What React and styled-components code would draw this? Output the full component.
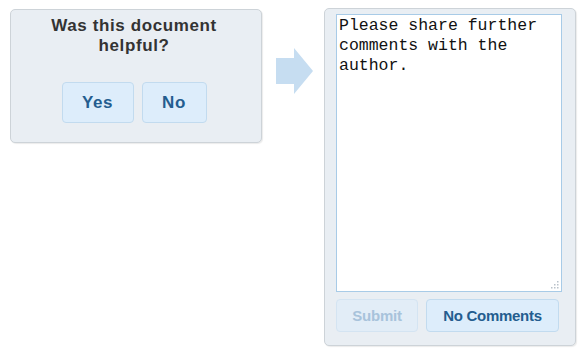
import React from "react";
import styled, { createGlobalStyle } from "styled-components";

const Global = createGlobalStyle`
  html, body { margin: 0; padding: 0; background: #ffffff; }
  body { font-family: "Liberation Sans", Arial, sans-serif; }
`;

const Page = styled.div`
  display: flex;
  align-items: flex-start;
  width: 583px;
  height: 354px;
  padding: 0 0 0 10px;
  box-sizing: border-box;
`;

const Panel = styled.div`
  box-sizing: border-box;
  background: #e9eef3;
  border: 1px solid #cdd3d8;
  border-radius: 5px;
  box-shadow: 1px 1px 1px rgba(0, 0, 0, 0.08);
  display: flex;
  flex-direction: column;
`;

const AskPanel = styled(Panel)`
  margin-top: 9px;
  width: 252px;
  height: 134px;
  align-items: center;
  padding: 6px 4px 0 0;
`;

const Title = styled.div`
  font-family: "Liberation Sans", Arial, sans-serif;
  font-weight: bold;
  font-size: 17px;
  line-height: 20px;
  letter-spacing: 0.6px;
  color: #333333;
  text-align: center;
  width: 200px;
`;

const ButtonRow = styled.div`
  display: flex;
  gap: ${(p) => p.$gap}px;
  margin-top: ${(p) => p.$top}px;
`;

const Btn = styled.button`
  box-sizing: border-box;
  width: ${(p) => p.$w}px;
  height: ${(p) => p.$h}px;
  padding: 0;
  border-radius: 4px;
  border: 1px solid ${(p) => (p.disabled ? "#d4e4f2" : "#c2dbef")};
  background: ${(p) => (p.disabled ? "#e2edf7" : "#ddedfb")};
  color: ${(p) => (p.disabled ? "#a8c3db" : "#245d8f")};
  font-family: "Liberation Sans", Arial, sans-serif;
  font-weight: bold;
  font-size: ${(p) => p.$fs}px;
  letter-spacing: ${(p) => p.$ls || 0}px;
  cursor: ${(p) => (p.disabled ? "default" : "pointer")};
`;

const ArrowBox = styled.div`
  margin: 48px 11px 0 14px;
  width: 37px;
  height: 46px;
  display: flex;
`;

const CommentPanel = styled(Panel)`
  margin-top: 8px;
  width: 252px;
  height: 338px;
  padding: 5px 0 0 11px;
`;

const AreaWrap = styled.div`
  position: relative;
  width: 226px;
  height: 278px;
`;

const Area = styled.textarea`
  box-sizing: border-box;
  width: 100%;
  height: 100%;
  margin: 0;
  resize: none;
  border: 1px solid #a8cbe7;
  background: #ffffff;
  padding: 1px 2px;
  font-family: "Liberation Mono", "Courier New", monospace;
  font-size: 16.5px;
  line-height: 20px;
  color: #111111;
  outline: none;
`;

const Grip = styled.svg`
  position: absolute;
  right: 3px;
  bottom: 3px;
`;

function Arrow() {
  return (
    <svg width="37" height="46" viewBox="0 0 37 46">
      <path d="M0 10 H18 V0 L37 23 L18 46 V36 H0 Z" fill="#c6ddf1" />
    </svg>
  );
}

export default function App() {
  return (
    <>
      <Global />
      <Page>
        <AskPanel>
          <Title>Was this document helpful?</Title>
          <ButtonRow $gap={8} $top={26}>
            <Btn $w={72} $h={41} $fs={17} $ls={0.6}>Yes</Btn>
            <Btn $w={65} $h={41} $fs={17} $ls={0.6}>No</Btn>
          </ButtonRow>
        </AskPanel>
        <ArrowBox>
          <Arrow />
        </ArrowBox>
        <CommentPanel>
          <AreaWrap>
            <Area defaultValue="Please share further comments with the author." />
            <Grip width="8" height="8" viewBox="0 0 8 8">
              <g fill="#b9c2ca">
                <rect x="6" y="0" width="1.5" height="1.5" />
                <rect x="3" y="3" width="1.5" height="1.5" />
                <rect x="6" y="3" width="1.5" height="1.5" />
                <rect x="0" y="6" width="1.5" height="1.5" />
                <rect x="3" y="6" width="1.5" height="1.5" />
                <rect x="6" y="6" width="1.5" height="1.5" />
              </g>
            </Grip>
          </AreaWrap>
          <ButtonRow $gap={8} $top={7}>
            <Btn disabled $w={82} $h={33} $fs={15} $ls={-0.2}>Submit</Btn>
            <Btn $w={133} $h={33} $fs={15} $ls={-0.3}>No Comments</Btn>
          </ButtonRow>
        </CommentPanel>
      </Page>
    </>
  );
}
